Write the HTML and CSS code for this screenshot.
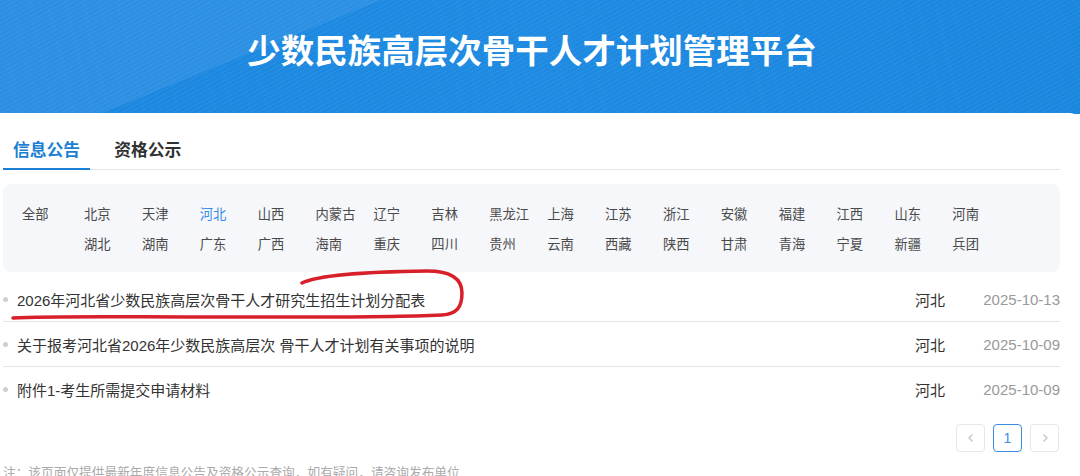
FILE: index.html
```html
<!DOCTYPE html>
<html lang="zh-CN">
<head>
    <meta charset="UTF-8">
    <meta name="viewport" content="width=device-width, initial-scale=1.0">
    <title>少数民族高层次骨干人才计划管理平台</title>
    <link rel="stylesheet" href="styles.css">
</head>
<body>
    <header class="banner">
        <h1>少数民族高层次骨干人才计划管理平台</h1>
    </header>

    <main class="card">
        <nav class="tabs">
            <a class="tab active">信息公告</a>
            <a class="tab">资格公示</a>
        </nav>

        <div class="filter">
            <span class="all">全部</span>
            <span>北京</span><span>天津</span><span class="on">河北</span><span>山西</span>
            <span>内蒙古</span><span>辽宁</span><span>吉林</span><span>黑龙江</span>
            <span>上海</span><span>江苏</span><span>浙江</span><span>安徽</span>
            <span>福建</span><span>江西</span><span>山东</span><span>河南</span>
            <span class="skip"></span>
            <span>湖北</span><span>湖南</span><span>广东</span><span>广西</span>
            <span>海南</span><span>重庆</span><span>四川</span><span>贵州</span>
            <span>云南</span><span>西藏</span><span>陕西</span><span>甘肃</span>
            <span>青海</span><span>宁夏</span><span>新疆</span><span>兵团</span>
        </div>

        <ul class="news">
            <li>
                <span class="title">2026年河北省少数民族高层次骨干人才研究生招生计划分配表</span>
                <span class="region">河北</span>
                <span class="date">2025-10-13</span>
            </li>
            <li>
                <span class="title">关于报考河北省2026年少数民族高层次 骨干人才计划有关事项的说明</span>
                <span class="region">河北</span>
                <span class="date">2025-10-09</span>
            </li>
            <li>
                <span class="title">附件1-考生所需提交申请材料</span>
                <span class="region">河北</span>
                <span class="date">2025-10-09</span>
            </li>
        </ul>

        <div class="pager">
            <button class="page-btn arrow">
                <svg width="10" height="10" viewBox="0 0 10 10"><path d="M6.5 1.5 L3 5 L6.5 8.5" fill="none" stroke="#c0c4cc" stroke-width="1.3"/></svg>
            </button>
            <button class="page-btn current">1</button>
            <button class="page-btn arrow">
                <svg width="10" height="10" viewBox="0 0 10 10"><path d="M3.5 1.5 L7 5 L3.5 8.5" fill="none" stroke="#c0c4cc" stroke-width="1.3"/></svg>
            </button>
        </div>

        <p class="note">注：该页面仅提供最新年度信息公告及资格公示查询，如有疑问，请咨询发布单位</p>

        <!-- hand-drawn red mark over the first row -->
        <svg class="mark" width="480" height="60" viewBox="0 0 480 60">
            <path d="M302 18 C 318 10, 360 7, 427 6 C 452 6, 462 14, 462 28 C 462 42, 457 49, 442 50 C 380 53, 300 52, 200 52 C 120 52, 50 51, 13 53"
                  fill="none" stroke="#d8202b" stroke-width="3.5" stroke-linecap="round"/>
        </svg>
    </main>
</body>
</html>
```

FILE: styles.css
```css
* {
    box-sizing: border-box;
}
body {
    margin: 0;
    font-family: "Liberation Sans", "Noto Sans CJK SC", sans-serif;
    color: #333;
    background-color: #fff;
    overflow: hidden;
}
.banner {
    height: 114px;
    display: flex;
    align-items: center;
    justify-content: center;
    padding: 0 16px 18px 0;
    background:
        linear-gradient(158deg, rgba(255,255,255,0.07) 0 28%, transparent 28% 100%),
        repeating-linear-gradient(152deg, rgba(255,255,255,0.05) 0 1px, transparent 1px 4px),
        linear-gradient(90deg, #1c87df 0%, #1e8ae2 50%, #1b86de 100%);
}
.banner h1 {
    margin: 0;
    color: #fff;
    font-family: "Noto Sans CJK SC", sans-serif;
    font-size: 33.5px;
    font-weight: 700;
    letter-spacing: 0;
}
.card {
    position: relative;
    margin-top: -1px;
    margin-right: 2px;
    padding: 0 18px 0 3px;
    background-color: #fff;
    border-top-right-radius: 8px;
}
.tabs {
    display: flex;
    gap: 4px;
    padding-top: 24px;
    border-bottom: 1px solid #e4e7ed;
}
.tab {
    padding: 0 10px 7px;
    margin-right: 10px;
    font-family: "Noto Sans CJK SC", sans-serif;
    font-size: 16.8px;
    font-weight: 700;
    line-height: 24px;
    color: #303133;
    border-bottom: 2px solid transparent;
    margin-bottom: -1px;
}
.tab.active {
    color: #1b7fd4;
    border-bottom-color: #1b7fd4;
}
.filter {
    margin-top: 14px;
    padding: 14px 0 14px 19px;
    background-color: #f5f7fa;
    border-radius: 8px;
    display: grid;
    grid-template-columns: 62px repeat(16, 57.9px);
    grid-auto-rows: 30px;
    align-items: center;
    font-family: "Noto Sans CJK SC", sans-serif;
    font-size: 13.3px;
    color: #4a4a4a;
}
.filter .on {
    color: #3a8ee6;
}
.news {
    list-style: none;
    margin: 5px 0 0;
    padding: 0;
}
.news li {
    display: flex;
    align-items: center;
    height: 45px;
    font-size: 15px;
    border-bottom: 1px solid #e6e6e6;
}
.news li:last-child {
    border-bottom: none;
}
.news li::before {
    content: "";
    width: 5px;
    height: 5px;
    margin: 0 9px 0 0;
    border-radius: 50%;
    background-color: #cfcfcf;
}
.title {
    flex: 1;
    color: #333;
}
.region {
    color: #333;
}
.date {
    width: 115px;
    text-align: right;
    color: #999;
}
.pager {
    display: flex;
    justify-content: flex-end;
    gap: 8px;
    margin-top: 12px;
    padding-right: 1px;
}
.page-btn {
    width: 29px;
    height: 28px;
    padding: 0;
    display: flex;
    align-items: center;
    justify-content: center;
    background-color: #fff;
    border: 1px solid #e4e7ed;
    border-radius: 4px;
    font-family: "Liberation Sans", sans-serif;
    font-size: 14px;
    color: #606266;
}
.page-btn.current {
    color: #3a8ee6;
    border-color: #3a8ee6;
}
.note {
    margin: 10px 0 0;
    font-family: "Noto Sans CJK SC", sans-serif;
    font-size: 12.7px;
    line-height: 20px;
    color: #aaa;
}
.mark {
    position: absolute;
    left: 0;
    top: 152px;
    pointer-events: none;
}
```
